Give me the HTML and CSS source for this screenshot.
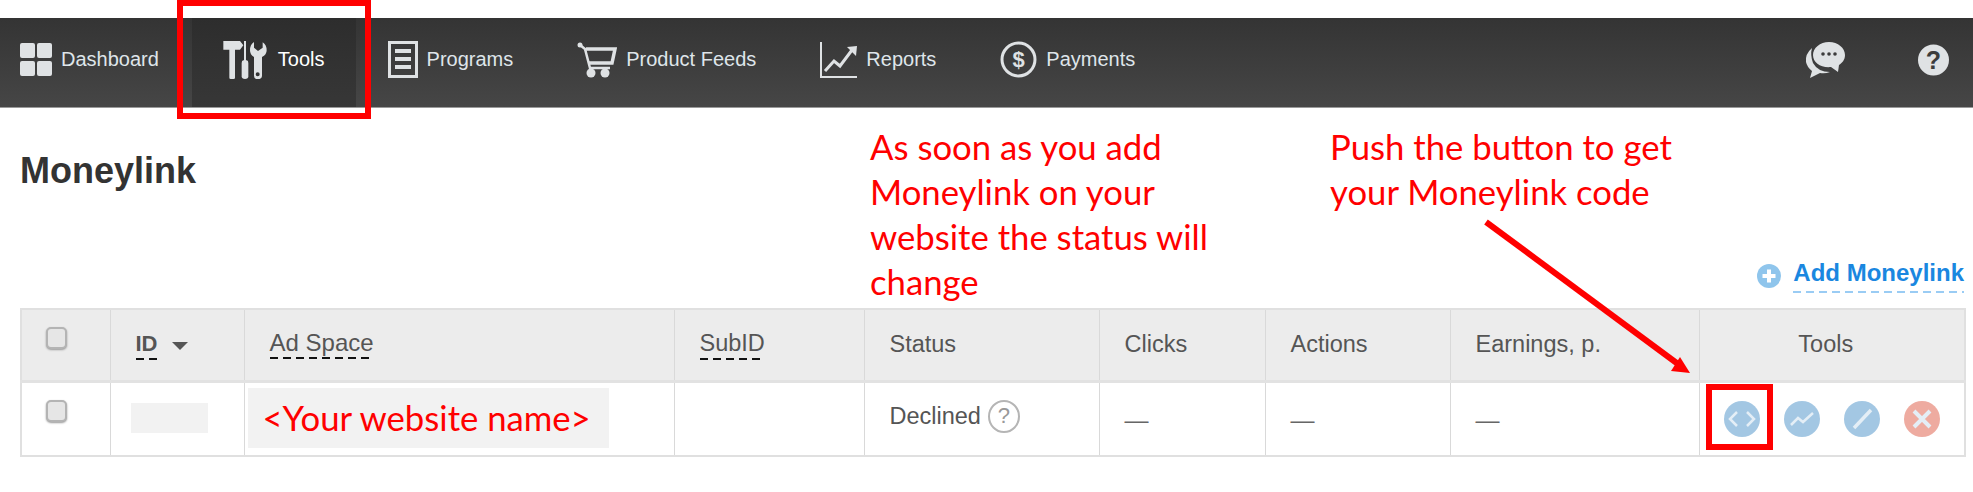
FILE: index.html
```html
<!DOCTYPE html>
<html lang="en">
<head>
    <meta charset="UTF-8">
    <title>Moneylink</title>
    <link rel="stylesheet" href="styles.css">
</head>
<body>
    <nav class="topbar">
        <a class="nav-item nav-first">
            <svg class="ico" width="32" height="33" viewBox="0 0 32 33"><rect width="15" height="15" rx="2"/><rect x="17" width="15" height="15" rx="2"/><rect y="18" width="15" height="15" rx="2"/><rect x="17" y="18" width="15" height="15" rx="2"/></svg>
            <span>Dashboard</span>
        </a>
        <a class="nav-item nav-active">
            <svg class="ico" width="44" height="38" viewBox="0 0 130 114"><path d="M0 0H50L60 13L50 26H35V110Q35 114 31 114H22Q18 114 18 110V26H0Z"/><rect x="62" width="6" height="60"/><path d="M55 66Q55 58 60 58H70Q75 58 75 66V106Q75 114 65 114Q55 114 55 106Z"/><path fill-rule="evenodd" d="M92 3V20L104 30L118 20V4Q130 12 130 28Q130 42 116 48V104Q116 114 103 114Q92 114 92 104V48Q80 42 80 28Q80 10 92 3ZM103 94A6 6 0 1 0 103.1 106A6 6 0 1 0 103 94Z"/></svg>
            <span>Tools</span>
        </a>
        <a class="nav-item">
            <svg class="ico" width="30" height="37" viewBox="0 0 30 37"><path fill-rule="evenodd" d="M0 0H30V37H0ZM3 3V34H27V3Z"/><rect x="7" y="8" width="16" height="4"/><rect x="7" y="16" width="16" height="4"/><rect x="7" y="24" width="16" height="4"/></svg>
            <span>Programs</span>
        </a>
        <a class="nav-item">
            <svg class="ico" width="40" height="36" viewBox="0 0 40 36"><circle cx="3" cy="3" r="2.5"/><path class="line" stroke-width="2.5" d="M3 3L8 7L13 26H33"/><path class="line" stroke-width="3.5" d="M9 7H38L35 21H12"/><circle cx="14" cy="31" r="4.5"/><circle cx="28" cy="31" r="4.5"/></svg>
            <span>Product Feeds</span>
        </a>
        <a class="nav-item">
            <svg class="ico" width="37" height="36" viewBox="0 0 37 36"><path class="line" stroke-width="2" d="M1 0V35H37"/><path class="line" stroke-width="3" d="M5 29L14 19L20 24L32 8"/><path d="M27 5L37 4L36 14Z"/></svg>
            <span>Reports</span>
        </a>
        <a class="nav-item">
            <svg class="ico" width="37" height="37" viewBox="0 0 37 37"><circle class="line" cx="18.500" cy="18.500" r="16.500" stroke-width="3"/><text class="dollar" x="18.500" y="26" text-anchor="middle">$</text></svg>
            <span>Payments</span>
        </a>
        <div class="nav-right">
            <svg class="ico" width="41" height="36" viewBox="0 0 41 36"><path d="M8 6Q1 12 2 20Q3 25 8 29L6 36L16 31Q21 32 26 30Q14 30 9 21Q6 13 8 6Z"/><path d="M25 0C34 0 41 6 41 13C41 18 38 21 35 23L34 30L27 25C17 26 9 21 9 13C9 6 16 0 25 0Z"/><g class="dots"><circle cx="19" cy="12" r="1.800"/><circle cx="25" cy="12" r="1.800"/><circle cx="31" cy="12" r="1.800"/></g></svg>
            <svg class="ico" width="31" height="32" viewBox="0 0 31 32"><circle cx="15.500" cy="16" r="15.500"/><text class="qmark" x="15.500" y="25" text-anchor="middle">?</text></svg>
        </div>
    </nav>

    <div class="page-head">
        <h1 class="title">Moneylink</h1>
        <a class="add-link">
            <svg width="24" height="24" viewBox="0 0 24 24"><circle cx="12" cy="12" r="12" fill="#8fc5ec"/><path d="M12 5.500V18.500M5.500 12H18.500" stroke="#fff" stroke-width="4"/></svg>
            <span class="add-text">Add Moneylink</span>
        </a>
    </div>

    <table class="grid">
        <colgroup>
            <col class="c-check"><col class="c-id"><col class="c-space"><col class="c-sub"><col class="c-status"><col class="c-clicks"><col class="c-actions"><col class="c-earn"><col class="c-tools">
        </colgroup>
        <thead>
            <tr>
                <th class="top-cell"><span class="check"></span></th>
                <th><span class="dashed strong">ID</span><span class="caret"></span></th>
                <th><span class="dashed wide">Ad Space</span></th>
                <th><span class="dashed">SubID</span></th>
                <th>Status</th>
                <th>Clicks</th>
                <th>Actions</th>
                <th>Earnings, p.</th>
                <th class="center">Tools</th>
            </tr>
        </thead>
        <tbody>
            <tr>
                <td class="top-cell"><span class="check"></span></td>
                <td class="id-cell"><div class="blank-id"></div></td>
                <td class="space-cell"><div class="site-name">&lt;Your website name&gt;</div></td>
                <td></td>
                <td><div class="status">Declined <span class="hint">?</span></div></td>
                <td class="dash">—</td>
                <td class="dash">—</td>
                <td class="dash">—</td>
                <td class="tools-cell">
                    <div class="tool-row">
                        <svg class="tool" width="36" height="36" viewBox="0 0 36 36"><circle class="blue" cx="18" cy="18" r="18"/><path class="tool-line" stroke-width="2.500" d="M13 11L6 18L13 25M23 11L30 18L23 25"/></svg>
                        <svg class="tool" width="36" height="36" viewBox="0 0 36 36"><circle class="blue" cx="18" cy="18" r="18"/><path class="tool-line" stroke-width="2.500" d="M7 24L14 17L19 21L29 12"/></svg>
                        <svg class="tool" width="36" height="36" viewBox="0 0 36 36"><circle class="blue" cx="18" cy="18" r="18"/><path class="tool-line" stroke-width="3.500" d="M10 27L27 9"/></svg>
                        <svg class="tool" width="36" height="36" viewBox="0 0 36 36"><circle class="red" cx="18" cy="18" r="18"/><path class="tool-line" stroke-width="4" d="M10 10L26 26M26 10L10 26"/></svg>
                    </div>
                </td>
            </tr>
        </tbody>
    </table>

    <!-- Kirmizi notlar -->
    <div class="box box-tab"></div>
    <div class="box box-btn"></div>
    <div class="note note-status">As soon as you add<br>Moneylink on your<br>website the status will<br>change</div>
    <div class="note note-push">Push the button to get<br>your Moneylink code</div>
    <svg class="arrow" width="1973" height="492" viewBox="0 0 1973 492"><path d="M1486 222L1678 364" stroke="#f00" stroke-width="6"/><path d="M1690 373L1680 357L1671 371Z" fill="#f00"/></svg>
</body>
</html>
```

FILE: styles.css
```css
body {
    margin: 0;
    padding-top: 18px;
    width: 1973px;
    height: 474px;
    overflow: hidden;
    position: relative;
    background: #fff;
    font-family: "Liberation Sans", Arial, sans-serif;
    color: #555;
}
/* Top menu */
.topbar {
    display: flex;
    align-items: stretch;
    height: 89px;
    border-bottom: 1px solid #9a9a9a;
    background: linear-gradient(#343434, #464646);
    font-size: 20px;
    color: #dfe5ea;
}
.nav-item {
    display: flex;
    align-items: center;
    gap: 9px;
    padding: 0 32px 6px;
}
.nav-first {
    padding-left: 20px;
    padding-right: 33px;
}
.nav-active {
    gap: 11px;
    padding-left: 31px;
    padding-right: 31px;
    color: #fff;
    background: linear-gradient(#2d2d2d, #373737);
}
.ico {
    fill: #dfe2e4;
    flex: none;
}
.line {
    fill: none;
    stroke: #dfe2e4;
}
.dollar {
    font: bold 22px "Liberation Sans", sans-serif;
}
.qmark {
    font: bold 25px "Liberation Sans", sans-serif;
    fill: #3c3c3c;
}
.dots {
    fill: #3c3c3c;
}
.nav-right {
    display: flex;
    align-items: center;
    gap: 73px;
    margin-left: auto;
    padding: 0 24px 6px 0;
}
/* Title row */
.page-head {
    display: flex;
    justify-content: space-between;
    height: 200px;
    padding: 0 9px 0 20px;
}
.title {
    margin: 42px 0 0;
    font-size: 36px;
    line-height: 42px;
    color: #333;
}
.add-link {
    display: flex;
    align-items: center;
    gap: 12px;
    align-self: flex-end;
    margin-bottom: 15px;
    font-size: 24px;
    font-weight: bold;
    color: #1a87e0;
}
.add-text {
    padding-bottom: 6px;
    line-height: 28px;
    background: repeating-linear-gradient(90deg, #9accf4 0 8px, transparent 8px 13px) left bottom / 100% 2px no-repeat;
}
/* Table */
.grid {
    width: 1944px;
    margin-left: 20px;
    table-layout: fixed;
    border-collapse: collapse;
    font-size: 23.5px;
    border: 2px solid #e0e0e0;
}
.c-check { width: 89px; }
.c-id { width: 134px; }
.c-space { width: 430px; }
.c-sub { width: 190px; }
.c-status { width: 235px; }
.c-clicks { width: 166px; }
.c-actions { width: 185px; }
.c-earn { width: 249px; }
.c-tools { width: 266px; }
.grid th,
.grid td {
    box-sizing: border-box;
    padding: 0 0 0 25px;
    border-left: 1px solid #d9d9d9;
    text-align: left;
    font-weight: normal;
}
.grid th {
    height: 72px;
    background: #ececec;
    border-bottom: 3px solid #e2e2e2;
}
.grid td {
    height: 75px;
}
.grid .center {
    padding: 0 12px 0 0;
    text-align: center;
}
.grid .top-cell {
    padding-top: 17px;
    padding-left: 24px;
    vertical-align: top;
}
.check {
    display: block;
    box-sizing: border-box;
    width: 21px;
    height: 22px;
    background: #e6e6e6;
    border: 2px solid #b4b4b4;
    border-radius: 5px;
    box-shadow: 0 1px 2px #999;
}
.dashed {
    display: inline-block;
    padding-bottom: 4px;
    line-height: 25px;
    background: repeating-linear-gradient(90deg, #111 0 8px, transparent 8px 13px) left bottom / 100% 2px no-repeat;
}
.wide {
    font-size: 24px;
}
.strong {
    font-weight: bold;
    font-size: 22px;
}
.caret {
    display: inline-block;
    margin-left: 14px;
    vertical-align: 1px;
    border-top: 8px solid #555;
    border-left: 8px solid transparent;
    border-right: 8px solid transparent;
}
.grid .id-cell {
    padding-left: 20px;
    vertical-align: top;
    padding-top: 20px;
}
.blank-id {
    width: 77px;
    height: 30px;
    background: #f2f2f2;
}
.grid .space-cell {
    padding-left: 3px;
}
.site-name {
    display: flex;
    align-items: center;
    box-sizing: border-box;
    width: 361px;
    height: 60px;
    margin-top: -2px;
    padding-left: 15px;
    background: #f2f2f2;
    font-family: Lato, sans-serif;
    font-size: 34.7px;
    color: #f00;
}
.status {
    display: flex;
    align-items: center;
    gap: 7px;
    margin-top: -5px;
}
.hint {
    display: flex;
    align-items: center;
    justify-content: center;
    box-sizing: border-box;
    width: 32px;
    height: 33px;
    border: 2px solid #b5b5b5;
    border-radius: 50%;
    font-size: 22px;
    color: #999;
}
.grid .dash {
    color: #666;
    font-size: 24px;
    padding-top: 3px;
}
.grid .tools-cell {
    padding-left: 24px;
}
.tool-row {
    display: flex;
    gap: 24px;
}
.tool {
    flex: none;
}
.blue { fill: #a3c7e3; }
.red { fill: #eeaba0; }
.tool-line {
    fill: none;
    stroke: #e4eef6;
}
/* Annotations over the screenshot */
.box {
    position: absolute;
    box-sizing: border-box;
    border: 6px solid #f00;
}
.box-tab {
    left: 177px;
    top: 0;
    width: 194px;
    height: 119px;
}
.box-btn {
    left: 1706px;
    top: 384px;
    width: 67px;
    height: 66px;
}
.note {
    position: absolute;
    font-family: Lato, sans-serif;
    font-size: 34.7px;
    line-height: 45px;
    color: #f00;
    white-space: nowrap;
}
.note-status {
    left: 870px;
    top: 124px;
}
.note-push {
    left: 1330px;
    top: 124px;
}
.arrow {
    position: absolute;
    left: 0;
    top: 0;
    pointer-events: none;
}
```
